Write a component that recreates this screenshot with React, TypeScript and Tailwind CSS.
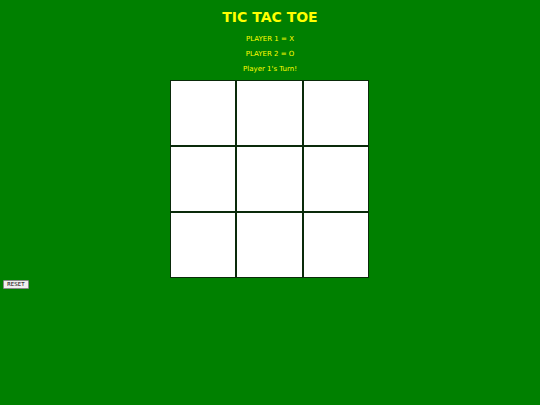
import React from "react";

export default function App() {
  const cells = Array.from({ length: 9 });
  return (
    <div className="w-[540px] h-[405px] bg-[#008000] overflow-hidden" style={{ fontFamily: '"DejaVu Sans", Verdana, sans-serif' }}>
      <div className="flex flex-col items-center">
        <div className="h-[35px] pt-[9px] text-[14px] leading-[16px] font-bold text-[#ffff00]">TIC TAC TOE</div>
        <div className="h-[15px] text-[7px] leading-[9px] text-[#ffff00]">PLAYER 1 = X</div>
        <div className="h-[15px] text-[7px] leading-[9px] text-[#ffff00]">PLAYER 2 = O</div>
        <div className="h-[15px] text-[7px] leading-[9px] text-[#ffff00]">Player 1's Turn!</div>
        <div className="grid grid-cols-3 grid-rows-[66px_66px_66px] w-[200px] pr-[1px]">
          {cells.map((_, i) => (
            <div key={i} className="bg-white border border-[#0a2a0a]" />
          ))}
        </div>
      </div>
      <div className="flex pl-[3px] pt-[2px]">
        <button className="h-[9px] px-[3px] bg-[#f0f0f0] border border-[#8a8a8a] rounded-[1px] text-[5.5px] leading-[7px] text-black">RESET</button>
      </div>
    </div>
  );
}
